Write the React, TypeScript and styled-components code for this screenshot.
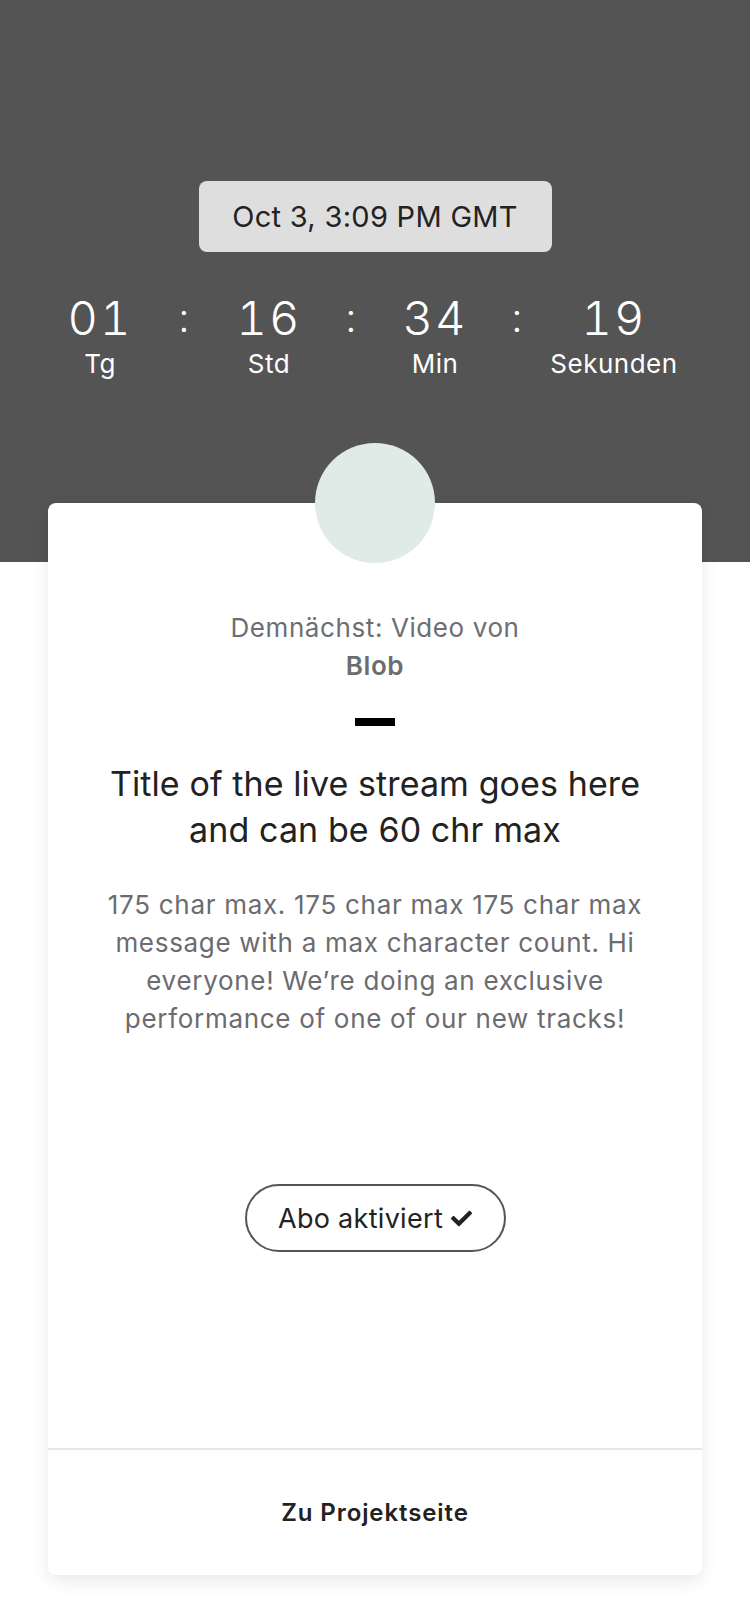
import React from "react";
import styled, { createGlobalStyle } from "styled-components";
import { FaCheck } from "react-icons/fa";

const GlobalStyle = createGlobalStyle`
  html, body {
    margin: 0;
    padding: 0;
    background: #ffffff;
  }
  body {
    font-family: Inter, "Noto Sans", "Liberation Sans", sans-serif;
    -webkit-font-smoothing: antialiased;
  }
  * { box-sizing: border-box; }
`;

const Page = styled.div`
  width: 750px;
  min-height: 1624px;
  background: linear-gradient(#545454 0, #545454 562px, #ffffff 562px);
  display: flex;
  flex-direction: column;
  align-items: stretch;
`;

const Header = styled.header`
  padding-top: 181px;
  display: flex;
  flex-direction: column;
  align-items: center;
`;

const DatePill = styled.div`
  width: 353px;
  height: 71px;
  border-radius: 8px;
  background: #dedede;
  color: #222222;
  font-size: 29px;
  letter-spacing: 0.3px;
  display: flex;
  align-items: center;
  justify-content: center;
`;

const Countdown = styled.div`
  margin-top: 40px;
  align-self: flex-start;
  margin-left: 40px;
  display: grid;
  grid-template-columns: 120px 48px 122px 42px 126px 38px 156px;
  color: #ffffff;
`;

const Unit = styled.div`
  display: flex;
  flex-direction: column;
  align-items: center;
`;

const Value = styled.div`
  font-size: 47px;
  font-weight: 300;
  line-height: 52px;
  letter-spacing: 2px;
  font-variant-numeric: tabular-nums;
`;

const Label = styled.div`
  font-size: 26px;
  line-height: 40px;
  font-weight: 400;
  letter-spacing: 0.5px;
`;

const Colon = styled.div`
  font-size: 40px;
  font-weight: 300;
  line-height: 52px;
  text-align: center;
`;

const Card = styled.main`
  margin: 119px 48px 0;
  background: #ffffff;
  border-radius: 8px;
  box-shadow: 0 6px 18px rgba(0, 0, 0, 0.09);
  display: flex;
  flex-direction: column;
`;

const CardBody = styled.div`
  display: flex;
  flex-direction: column;
  align-items: center;
  padding: 0 30px 196px;
  text-align: center;
`;

const Avatar = styled.div`
  width: 120px;
  height: 120px;
  border-radius: 50%;
  background: #e0eae6;
  margin-top: -60px;
`;

const Kicker = styled.div`
  margin-top: 46px;
  font-size: 26px;
  line-height: 38px;
  letter-spacing: 0.6px;
  color: #6d6e72;
`;

const Artist = styled.div`
  font-size: 26px;
  line-height: 38px;
  font-weight: 600;
  letter-spacing: 0.6px;
  color: #6b6e6e;
`;

const Dash = styled.div`
  margin-top: 33px;
  width: 40px;
  height: 8px;
  background: #000000;
`;

const Title = styled.h1`
  margin: 35px 0 0;
  font-size: 34px;
  line-height: 46px;
  font-weight: 400;
  color: #222222;
  letter-spacing: 0.1px;
`;

const Description = styled.p`
  margin: 33px 0 0;
  font-size: 26px;
  line-height: 38px;
  letter-spacing: 0.7px;
  color: #6b6b70;
`;

const SubscribeButton = styled.button`
  margin-top: 146px;
  width: 261px;
  height: 68px;
  border: 2px solid #555555;
  border-radius: 34px;
  background: #ffffff;
  color: #222222;
  font-family: inherit;
  font-size: 27px;
  letter-spacing: 0.3px;
  display: flex;
  align-items: center;
  justify-content: center;
  gap: 8px;
  padding: 0;
  cursor: pointer;
`;

const Footer = styled.div`
  border-top: 2px solid #e6e6e6;
  height: 127px;
  display: flex;
  align-items: center;
  justify-content: center;
  font-size: 24px;
  font-weight: 600;
  letter-spacing: 0.9px;
  color: #222222;
`;

const units = [
  { value: "01", label: "Tg" },
  { value: "16", label: "Std" },
  { value: "34", label: "Min" },
  { value: "19", label: "Sekunden" },
];

export default function App() {
  return (
    <>
      <GlobalStyle />
      <Page>
        <Header>
          <DatePill>Oct 3, 3:09 PM GMT</DatePill>
          <Countdown>
            {units.map((u, i) => (
              <React.Fragment key={u.label}>
                {i > 0 && <Colon>:</Colon>}
                <Unit>
                  <Value>{u.value}</Value>
                  <Label>{u.label}</Label>
                </Unit>
              </React.Fragment>
            ))}
          </Countdown>
        </Header>
        <Card>
          <CardBody>
            <Avatar />
            <Kicker>Demnächst: Video von</Kicker>
            <Artist>Blob</Artist>
            <Dash />
            <Title>
              Title of the live stream goes here
              <br />
              and can be 60 chr max
            </Title>
            <Description>
              175 char max. 175 char max 175 char max
              <br />
              message with a max character count. Hi
              <br />
              everyone! We’re doing an exclusive
              <br />
              performance of one of our new tracks!
            </Description>
            <SubscribeButton>
              Abo aktiviert
              <FaCheck size={21} />
            </SubscribeButton>
          </CardBody>
          <Footer>Zu Projektseite</Footer>
        </Card>
      </Page>
    </>
  );
}
